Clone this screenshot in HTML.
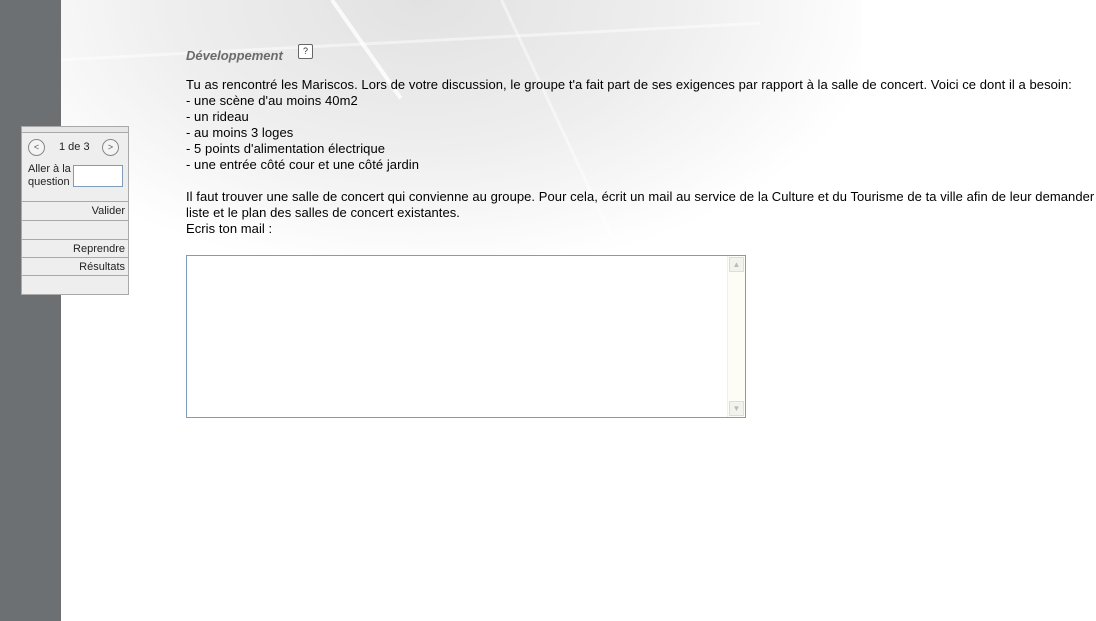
<!DOCTYPE html>
<html><head><meta charset="utf-8"><style>
body{margin:0;width:1096px;height:621px;overflow:hidden;background:#fff;font-family:"Liberation Sans",Arial,sans-serif;position:relative}
#side{position:absolute;left:0;top:0;width:61px;height:621px;background:#6d7072}
#bg{position:absolute;left:61px;top:0;width:800px;height:260px;background:radial-gradient(ellipse at 45% 0%,#e2e2e2 0%,#eeeeee 40%,#fff 75%)}
.ln{position:absolute;background:rgba(255,255,255,.8)}
#panel{position:absolute;left:21px;top:126px;width:106px;height:168px;background:#eeeeee;border:1px solid #a9a9a9;border-top:none;font-size:11px;color:#222}
.row{position:absolute;left:0;width:106px;border-top:1px solid #a9a9a9;text-align:right;box-sizing:border-box;padding-right:3px;height:19px;line-height:19px}
.circ{position:absolute;width:15px;height:15px;border:1px solid #888;border-radius:50%;background:#f4f4f4;font-size:9px;line-height:15px;text-align:center;color:#555}
#main{position:absolute;left:186px;top:77px;font-size:13px;line-height:16px;color:#000;white-space:nowrap;letter-spacing:0.06px}
h1{position:absolute;left:186px;top:48px;margin:0;font-size:13px;font-style:italic;font-weight:bold;color:#6b6b6b}
#q{position:absolute;left:298px;top:44px;width:13px;height:13px;border:1px solid #666;border-radius:2px;font-size:9px;line-height:13px;text-align:center;background:#fff;color:#333}
#ta{position:absolute;left:186px;top:255px;width:558px;height:161px;border:1px solid #7f9db9;background:#fff}
#sb{position:absolute;right:0;top:0;width:17px;height:161px;background:#fdfdf5;border-left:1px solid #eee}
.ar{position:absolute;left:1px;width:15px;height:15px;background:#f3f3ee;border:1px solid #ddd;box-sizing:border-box;font-size:8px;color:#bbb;text-align:center;line-height:13px}
</style></head><body>
<div id="side"></div>
<div id="bg"></div>
<div class="ln" style="left:330px;top:0;width:4px;height:120px;transform:rotate(-35deg);transform-origin:top"></div>
<div class="ln" style="left:500px;top:0;width:3px;height:260px;transform:rotate(-25deg);transform-origin:top;opacity:.6"></div>
<div class="ln" style="left:61px;top:40px;width:700px;height:3px;transform:rotate(-3deg);opacity:.6"></div>
<div id="panel">
<div style="position:absolute;left:0;top:0;width:106px;height:5px;border-top:1px solid #a9a9a9;border-bottom:1px solid #a9a9a9;background:#e6e6e6"></div>
<div class="circ" style="left:6px;top:13px">&lt;</div>
<div style="position:absolute;left:37px;top:15px">1 de 3</div>
<div class="circ" style="left:80px;top:13px">&gt;</div>
<div style="position:absolute;left:6px;top:37px;line-height:13px">Aller à la<br>question</div>
<div style="position:absolute;left:51px;top:39px;width:48px;height:20px;border:1px solid #7f9db9;background:#fff"></div>
<div class="row" style="top:75px">Valider</div>
<div class="row" style="top:94px"></div>
<div class="row" style="top:113px">Reprendre</div>
<div class="row" style="top:131px">Résultats</div>
<div class="row" style="top:149px"></div>
</div>
<h1>Développement</h1>
<div id="q">?</div>
<div id="main">Tu as rencontré les Mariscos. Lors de votre discussion, le groupe t'a fait part de ses exigences par rapport à la salle de concert. Voici ce dont il a besoin:<br>- une scène d'au moins 40m2<br>- un rideau<br>- au moins 3 loges<br>- 5 points d'alimentation électrique<br>- une entrée côté cour et une côté jardin<br><br>Il faut trouver une salle de concert qui convienne au groupe. Pour cela, écrit un mail au service de la Culture et du Tourisme de ta ville afin de leur demander la<br>liste et le plan des salles de concert existantes.<br>Ecris ton mail :</div>
<div id="ta"><div id="sb"><div class="ar" style="top:1px">▲</div><div class="ar" style="bottom:1px">▼</div></div></div>
</body></html>
